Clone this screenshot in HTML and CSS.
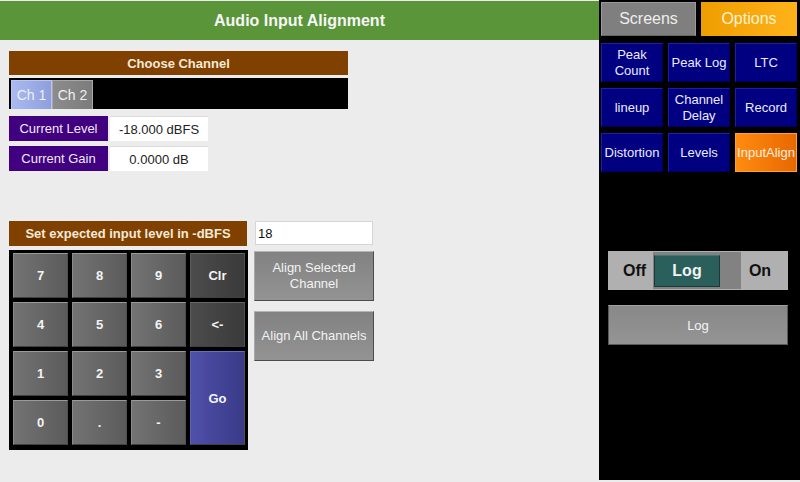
FILE: index.html
```html
<!DOCTYPE html>
<html>
<head>
<meta charset="utf-8">
<link rel="stylesheet" href="styles.css">
</head>
<body>
<div class="app">
  <div class="main">
    <div class="header">Audio Input Alignment</div>
    <div class="content">
      <div class="section-title">Choose Channel</div>
      <div class="channels">
        <div class="ch ch-active">Ch 1</div>
        <div class="ch">Ch 2</div>
      </div>
      <div class="info-row">
        <div class="info-label">Current Level</div>
        <div class="info-value">-18.000 dBFS</div>
      </div>
      <div class="info-row">
        <div class="info-label">Current Gain</div>
        <div class="info-value">0.0000 dB</div>
      </div>
      <div class="align-area">
        <div class="left-col">
          <div class="section-title level-title">Set expected input level in -dBFS</div>
          <div class="keypad">
            <div class="key">7</div>
            <div class="key">8</div>
            <div class="key">9</div>
            <div class="key key-dark">Clr</div>
            <div class="key">4</div>
            <div class="key">5</div>
            <div class="key">6</div>
            <div class="key key-dark">&lt;-</div>
            <div class="key">1</div>
            <div class="key">2</div>
            <div class="key">3</div>
            <div class="key key-go">Go</div>
            <div class="key">0</div>
            <div class="key">.</div>
            <div class="key">-</div>
          </div>
        </div>
        <div class="right-col">
          <div class="level-input">18</div>
          <div class="align-btn">Align Selected<br>Channel</div>
          <div class="align-btn align-all">Align All Channels</div>
        </div>
      </div>
    </div>
  </div>
  <div class="side">
    <div class="tabs">
      <div class="tab tab-screens">Screens</div>
      <div class="tab tab-options">Options</div>
    </div>
    <div class="menu">
      <div class="menu-btn">Peak<br>Count</div>
      <div class="menu-btn">Peak Log</div>
      <div class="menu-btn">LTC</div>
      <div class="menu-btn">lineup</div>
      <div class="menu-btn">Channel<br>Delay</div>
      <div class="menu-btn">Record</div>
      <div class="menu-btn">Distortion</div>
      <div class="menu-btn">Levels</div>
      <div class="menu-btn menu-active">InputAlign</div>
    </div>
    <div class="toggle">
      <div class="toggle-off">Off</div>
      <div class="toggle-track"><div class="toggle-knob">Log</div></div>
      <div class="toggle-on">On</div>
    </div>
    <div class="log-btn">Log</div>
  </div>
</div>
</body>
</html>
```
FILE: styles.css
```css
html, body {
  margin: 0;
  padding: 0;
  background: #ececec;
  font-family: "Liberation Sans", Arial, sans-serif;
}
.app {
  display: flex;
  width: 800px;
  height: 480px;
  overflow: hidden;
}
.main {
  width: 599px;
  padding-top: 1px;
  box-sizing: border-box;
  background: #ececec;
}
.header {
  height: 39px;
  background: #5b9539;
  color: #f6f6f6;
  font-weight: bold;
  font-size: 16px;
  display: flex;
  align-items: center;
  justify-content: center;
}
.content {
  padding-left: 9px;
  padding-top: 11px;
}
.section-title {
  width: 339px;
  height: 24px;
  background: #804000;
  color: #f3ead8;
  font-weight: bold;
  font-size: 13px;
  display: flex;
  align-items: center;
  justify-content: center;
}
.channels {
  width: 339px;
  height: 31px;
  margin-top: 3px;
  background: #000;
  box-sizing: border-box;
  padding: 2px 0 0 2px;
  display: flex;
}
.ch {
  width: 41px;
  height: 29px;
  box-sizing: border-box;
  border: 1px solid #a8a8a8;
  border-bottom: none;
  background: linear-gradient(to right, #8c8c8c, #7c7c7c);
  color: #f0f0f0;
  font-size: 14px;
  display: flex;
  align-items: center;
  justify-content: center;
}
.ch-active {
  background: linear-gradient(to right, #a9baf2, #8f9fdc);
  border-color: #b8c6f4;
}
.info-row {
  display: flex;
  margin-top: 5px;
  height: 25px;
}
.channels + .info-row {
  margin-top: 7px;
}
.info-label {
  width: 99px;
  background: #40007f;
  color: #f0eaf8;
  font-size: 13px;
  display: flex;
  align-items: center;
  justify-content: center;
}
.info-value {
  width: 98px;
  margin-left: 2px;
  background: #fff;
  border-top: 1px solid #dcdcdc;
  box-sizing: border-box;
  color: #222;
  font-size: 13px;
  display: flex;
  align-items: center;
  justify-content: center;
}
.align-area {
  display: flex;
  margin-top: 50px;
}
.left-col {
  width: 239px;
}
.level-title {
  width: 238px;
  height: 25px;
}
.keypad {
  margin-top: 4px;
  width: 239px;
  height: 200px;
  box-sizing: border-box;
  background: #000;
  padding: 3px 3px 5px 4px;
  display: grid;
  grid-template-columns: repeat(4, 55px);
  grid-template-rows: repeat(4, 45px);
  gap: 4px;
}
.key {
  box-sizing: border-box;
  border-top: 1px solid #9a9a9a;
  border-left: 1px solid #8a8a8a;
  border-right: 1px solid #505050;
  border-bottom: 1px solid #404040;
  background: linear-gradient(to right, #737373, #5b5b5b);
  color: #f4f4f4;
  font-weight: bold;
  font-size: 13px;
  display: flex;
  align-items: center;
  justify-content: center;
}
.key-dark {
  background: linear-gradient(to right, #4c4c4c, #3a3a3a);
  border-top-color: #666;
  border-left-color: #5a5a5a;
}
.key-go {
  grid-column: 4;
  grid-row: 3 / span 2;
  background: linear-gradient(to right, #4f50a8, #393a88);
  border-top-color: #6c6cc0;
  border-left-color: #5f60b8;
}
.right-col {
  margin-left: 6px;
  width: 120px;
}
.level-input {
  margin-left: 1px;
  width: 118px;
  height: 24px;
  box-sizing: border-box;
  background: #fff;
  border: 1px solid #d6d6d6;
  color: #111;
  font-size: 13px;
  padding-left: 2px;
  display: flex;
  align-items: center;
}
.align-btn {
  margin-top: 6px;
  width: 120px;
  height: 50px;
  box-sizing: border-box;
  border-top: 1px solid #b4b4b4;
  border-left: 1px solid #a8a8a8;
  border-bottom: 1px solid #4c4c4c;
  border-right: 1px solid #4c4c4c;
  background: linear-gradient(to bottom, #828282, #939393);
  color: #f2f2f2;
  font-size: 13px;
  text-align: center;
  line-height: 16px;
  display: flex;
  align-items: center;
  justify-content: center;
}
.align-all {
  margin-top: 10px;
}
.side {
  width: 201px;
  height: 480px;
  background: #000;
  padding: 2px 0 0 2px;
  box-sizing: border-box;
}
.tabs {
  display: flex;
  gap: 5px;
}
.tab {
  height: 34px;
  box-sizing: border-box;
  font-size: 16px;
  color: #eeeeee;
  display: flex;
  align-items: center;
  justify-content: center;
}
.tab-screens {
  width: 95px;
  background: #7f7f7f;
  border: 1px solid #9a9a9a;
  border-bottom-color: #666;
}
.tab-options {
  width: 96px;
  background: linear-gradient(to right, #ef9e00, #ffb21a);
  color: #fff3d0;
}
.menu {
  margin-top: 7px;
  display: grid;
  grid-template-columns: repeat(3, 62px);
  grid-template-rows: repeat(3, 39px);
  column-gap: 5px;
  row-gap: 6px;
}
.menu-btn {
  box-sizing: border-box;
  background: #000080;
  border: 1px solid #1c1cb0;
  border-right-color: #00005a;
  border-bottom-color: #00005a;
  color: #ebebff;
  font-size: 13px;
  line-height: 16px;
  text-align: center;
  display: flex;
  align-items: center;
  justify-content: center;
}
.menu-active {
  background: linear-gradient(to right, #ff8c10, #e86800);
  border-color: #ffa040;
  color: #fff0e0;
}
.toggle {
  margin: 79px 0 0 7px;
  width: 180px;
  height: 39px;
  background: #b0b0b0;
  display: flex;
  align-items: center;
  box-sizing: border-box;
}
.toggle-off, .toggle-on {
  font-weight: bold;
  font-size: 16px;
  color: #111;
  display: flex;
  justify-content: center;
}
.toggle-off {
  width: 45px;
  padding-left: 8px;
  box-sizing: border-box;
}
.toggle-on {
  width: 47px;
  padding-right: 9px;
  box-sizing: border-box;
}
.toggle-track {
  width: 88px;
  height: 37px;
  background: #828282;
  box-sizing: border-box;
  padding: 3px 0 0 1px;
}
.toggle-knob {
  width: 66px;
  height: 32px;
  box-sizing: border-box;
  background: #2a5f5c;
  border: 1px solid #1a3a38;
  border-top-color: #3d7a76;
  color: #f3f3f3;
  font-weight: bold;
  font-size: 16px;
  display: flex;
  align-items: center;
  justify-content: center;
}
.log-btn {
  margin: 15px 0 0 7px;
  width: 180px;
  height: 40px;
  box-sizing: border-box;
  border: 1px solid #5a5a5a;
  border-top-color: #a0a0a0;
  background: linear-gradient(to bottom, #888888, #949494);
  color: #f4f4f4;
  font-size: 13px;
  display: flex;
  align-items: center;
  justify-content: center;
}
```
